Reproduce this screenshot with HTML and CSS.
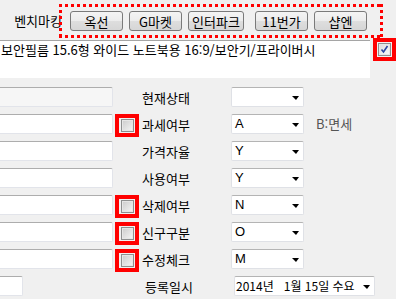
FILE: index.html
```html
<!DOCTYPE html>
<html lang="ko">
<head>
    <meta charset="UTF-8">
    <meta name="viewport" content="width=device-width, initial-scale=1.0">
    <title>상품정보</title>
    <link rel="stylesheet" href="styles.css">
</head>
<body>
    <div class="topbar">
        <span class="bench-label">벤치마킹</span>
        <div class="bench">
            <button class="btn">옥선</button>
            <button class="btn">G마켓</button>
            <button class="btn wide">인터파크</button>
            <button class="btn far">11번가</button>
            <button class="btn">샵엔</button>
        </div>
    </div>

    <div class="desc-row">
        <div class="desc">보안필름 15.6형 와이드 노트북용 16:9/보안기/프라이버시</div>
        <span class="mark top">
            <span class="check">
                <svg width="11" height="11" viewBox="0 0 11 11"><path d="M2.5 5.5 L4.5 8 L8.5 2" fill="none" stroke="#2a46a0" stroke-width="1.6"/></svg>
            </span>
        </span>
    </div>

    <div class="form">
        <div class="row">
            <span class="field disabled"></span>
            <span class="cell"></span>
            <span class="label">현재상태</span>
            <span class="select"><span class="value"></span><span class="arrow"></span></span>
        </div>
        <div class="row">
            <span class="field"></span>
            <span class="cell mark"><span class="check"></span></span>
            <span class="label">과세여부</span>
            <span class="select"><span class="value">A</span><span class="arrow"></span></span>
            <span class="hint">B:면세</span>
        </div>
        <div class="row">
            <span class="field"></span>
            <span class="cell"></span>
            <span class="label">가격자율</span>
            <span class="select"><span class="value">Y</span><span class="arrow"></span></span>
        </div>
        <div class="row">
            <span class="field"></span>
            <span class="cell"></span>
            <span class="label">사용여부</span>
            <span class="select"><span class="value">Y</span><span class="arrow"></span></span>
        </div>
        <div class="row">
            <span class="field"></span>
            <span class="cell mark"><span class="check"></span></span>
            <span class="label">삭제여부</span>
            <span class="select"><span class="value">N</span><span class="arrow"></span></span>
        </div>
        <div class="row">
            <span class="field"></span>
            <span class="cell mark"><span class="check"></span></span>
            <span class="label">신구구분</span>
            <span class="select"><span class="value">O</span><span class="arrow"></span></span>
        </div>
        <div class="row">
            <span class="field"></span>
            <span class="cell mark"><span class="check"></span></span>
            <span class="label">수정체크</span>
            <span class="select"><span class="value">M</span><span class="arrow"></span></span>
        </div>
        <div class="row">
            <span class="field short"></span>
            <span class="spacer"></span>
            <span class="label">등록일시</span>
            <span class="select date"><span class="value">2014년&nbsp;&nbsp;&nbsp;1월 15일 수요</span><span class="arrow"></span></span>
        </div>
    </div>
</body>
</html>
```

FILE: styles.css
```css
body {
    margin: 0;
    background-color: #f0f0f0;
    font-family: "Noto Sans CJK KR", "Liberation Sans", sans-serif;
    font-size: 12px;
    color: #000;
}
.topbar {
    display: flex;
    align-items: flex-start;
    height: 40px;
    padding-top: 4px;
    box-sizing: border-box;
}
.bench-label {
    width: 62px;
    text-align: right;
    line-height: 34px;
    font-size: 13px;
}
/* square red dots, like the marker in the capture */
.bench {
    display: flex;
    align-items: center;
    gap: 6px;
    margin-left: -3px;
    width: 324px;
    height: 34px;
    padding-left: 11px;
    box-sizing: border-box;
    background:
        repeating-linear-gradient(90deg, #ff0000 0 3px, transparent 3px 6px) top / 100% 3px no-repeat,
        repeating-linear-gradient(90deg, #ff0000 0 3px, transparent 3px 6px) bottom / 100% 3px no-repeat,
        repeating-linear-gradient(180deg, #ff0000 0 3px, transparent 3px 6px) left / 3px 100% no-repeat,
        repeating-linear-gradient(180deg, #ff0000 0 3px, transparent 3px 6px) right / 3px 100% no-repeat;
}
.btn {
    width: 53px;
    height: 20px;
    padding: 0;
    font-family: inherit;
    font-size: 13px;
    border: 1px solid #7a7a7a;
    border-radius: 3px;
    background: linear-gradient(#f4f4f4, #ececec 50%, #dedede 51%, #d6d6d6);
}
.btn.wide {
    width: 56px;
}
.btn.far {
    margin-left: 5px;
}
.desc-row {
    display: flex;
    align-items: flex-start;
}
.desc {
    width: 370px;
    height: 38px;
    padding: 1px 0 0 1px;
    box-sizing: border-box;
    background-color: #fff;
    border-top: 1px solid #a5a5a5;
    font-size: 13px;
    line-height: 16px;
    white-space: nowrap;
    overflow: hidden;
}
.mark {
    display: flex;
    align-items: center;
    justify-content: center;
    width: 24px;
    height: 23px;
    border: 4px solid #ff0000;
    box-sizing: border-box;
}
.mark.top {
    margin: -2px 0 0 3px;
    width: 23px;
}
.check {
    display: flex;
    align-items: center;
    justify-content: center;
    width: 13px;
    height: 13px;
    box-sizing: border-box;
    border: 1px solid #8e8f8f;
    background: linear-gradient(135deg, #cbcbcb, #f6f6f6);
    box-shadow: inset 0 0 0 1px #e6e6e6;
}
.desc-row .check {
    background: linear-gradient(135deg, #dcdcdc, #fafafa);
}
.form {
    display: flex;
    flex-direction: column;
    gap: 4px;
    margin-top: 9px;
}
.row {
    display: flex;
    align-items: flex-start;
    height: 23px;
}
.field {
    width: 113px;
    height: 20px;
    box-sizing: border-box;
    background-color: #fff;
    border: 1px solid #e2e4ea;
    border-top-color: #adadad;
    border-left: 0;
    border-radius: 0 2px 2px 0;
}
.field.disabled {
    background-color: #f6f6f6;
}
.field.short {
    width: 23px;
}
.cell {
    width: 24px;
    height: 23px;
    margin-left: 2px;
    box-sizing: border-box;
}
.spacer {
    width: 119px;
}
.label {
    width: 89px;
    margin-left: 3px;
    line-height: 21px;
    font-size: 13px;
}
.select {
    display: flex;
    align-items: center;
    width: 73px;
    height: 20px;
    box-sizing: border-box;
    padding: 0 4px 0 3px;
    background-color: #fff;
    border: 1px solid #dfe1e6;
    border-top-color: #b4b4b4;
    border-radius: 2px;
}
.select.date {
    width: 141px;
    padding-left: 1px;
}
.value {
    flex: 1;
    font-family: "Liberation Sans", "Noto Sans CJK KR", sans-serif;
    font-size: 13px;
    line-height: 16px;
    white-space: nowrap;
}
.date .value {
    font-family: "Noto Sans CJK KR", sans-serif;
    font-size: 12px;
}
.arrow {
    width: 0;
    height: 0;
    margin-top: 2px;
    border-left: 4px solid transparent;
    border-right: 3px solid transparent;
    border-top: 4px solid #000;
}
.hint {
    margin-left: 12px;
    line-height: 20px;
    font-size: 13px;
    color: #555;
}
```
